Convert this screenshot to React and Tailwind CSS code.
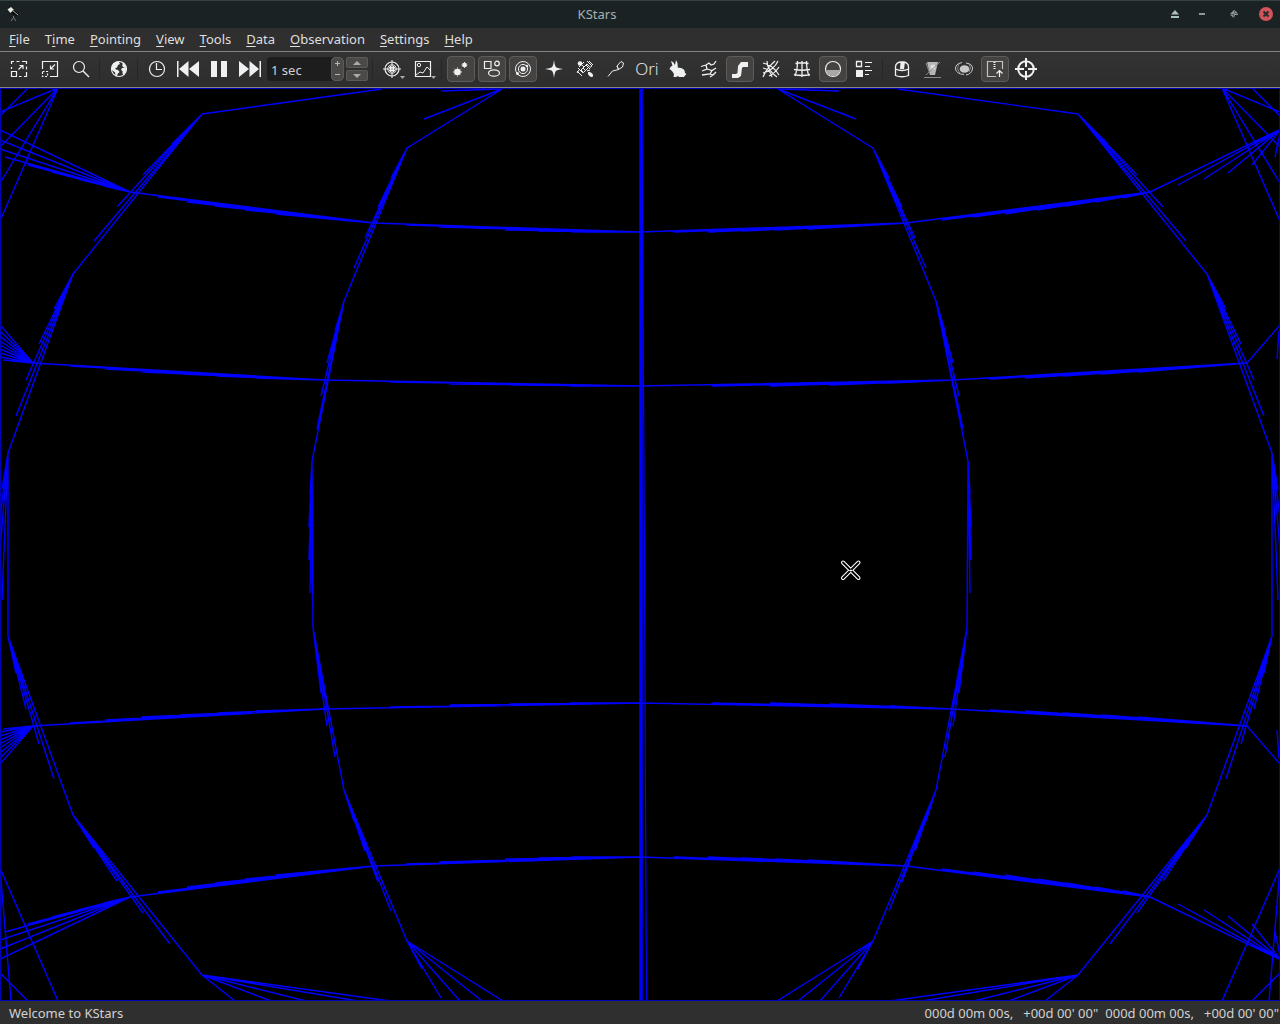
import React from "react";

const menus = [
  ["", "F", "ile"],
  ["T", "i", "me"],
  ["", "P", "ointing"],
  ["", "V", "iew"],
  ["", "T", "ools"],
  ["", "D", "ata"],
  ["", "O", "bservation"],
  ["", "S", "ettings"],
  ["", "H", "elp"],
];

function Glyph({ children }) {
  return (
    <svg viewBox="0 0 22 22" className="h-[22px] w-[22px]" fill="none" stroke="#eff0f1" strokeWidth="1" aria-hidden="true">
      {children}
    </svg>
  );
}

const solid = { fill: "#eff0f1", stroke: "none" };

const icons = {
  zoomIn: (
    <>
      <path d="M3.500 11V9M3.500 6V3.500H6M8.500 3.500h3M14 3.500h4.500V6M18.500 8.500v3M18.500 14v4.500H16M13.500 18.500H11" strokeWidth="1.200" />
      <path d="M3.500 13.500h5v5h-5zM10.500 11.500l4-4M11.500 7.500h3.500V11" strokeWidth="1.200" />
    </>
  ),
  zoomOut: (
    <>
      <path d="M3.500 11V3.500h15v15H11M11.500 7.500V11H15M11.500 11l4.500-4.500" strokeWidth="1.200" />
      <path d="M3.500 13.500h5v5h-5z" strokeDasharray="2 1.500" strokeWidth="1.200" />
    </>
  ),
  find: (
    <>
      <circle cx="9" cy="9" r="5.500" strokeWidth="1.200" />
      <path d="M13 13l6 6" strokeWidth="1.400" />
    </>
  ),
  globe: (
    <>
      <circle cx="11" cy="11" r="7.500" strokeWidth="1.200" />
      <path {...solid} d="M5 5.500l4-2 2 .5 1 2-2 1-1 2.500-2 1 1 1 2 .5 1.500 2-2 2-.5 2.500-1.500-1-.5-3L4 12V9zM13 4l3 1 2 3v2l-1-.5-2-.5-1-2 1-1zM14 10l3-.5 1.500 1.500-1 3.500-2 2.500-1-1.500V13l-1.500-1z" />
    </>
  ),
  clock: (
    <>
      <circle cx="11" cy="11" r="7.500" strokeWidth="1.200" />
      <path d="M10.500 5v6.500H16" strokeWidth="1.200" />
    </>
  ),
  back: <path {...solid} d="M0 3h1.500v16H0zM11.500 3v16L2 11zM22 3v16l-10-8z" />,
  pause: <path {...solid} d="M3 3h6v16H3zM13 3h6v16h-6z" />,
  forward: <path {...solid} d="M22 3h-1.500v16H22zM10.500 3v16l9.500-8zM0 3v16l10-8z" />,
  target: (
    <>
      <circle cx="11" cy="11" r="7" strokeWidth="1.200" />
      <circle cx="11" cy="11" r="4.200" />
      <path d="M11 2v18M2 11h18M9.500 8v6M12.500 8v6M8 9.500h6M8 12.500h6" />
    </>
  ),
  picture: (
    <>
      <path d="M3.500 3.500h15v15h-15z" strokeWidth="1.200" />
      <circle cx="7" cy="7" r="1.700" />
      <path d="M4 17l4-3 3 1 4-6 3 3" />
    </>
  ),
  stars: (
    <>
      <circle {...solid} cx="7.500" cy="14" r="3.300" />
      <circle {...solid} cx="14.500" cy="7" r="2.300" />
      <path d="M7.500 9.500v9M3 14h9M4.300 10.800l6.400 6.400M10.700 10.800l-6.400 6.400M14.500 4v6M11.500 7h6M12.400 4.900l4.200 4.200M16.600 4.900l-4.200 4.200" strokeDasharray="1 .6" />
    </>
  ),
  deepSky: (
    <>
      <path d="M3.500 3.500h6.500v7H3.500z" strokeWidth="1.200" />
      <circle cx="16" cy="5.500" r="2.300" strokeWidth="1.200" />
      <ellipse cx="13" cy="15" rx="5.500" ry="3.200" strokeWidth="1.200" />
    </>
  ),
  planets: (
    <>
      <circle cx="11" cy="11" r="7.500" />
      <circle cx="11" cy="11" r="4.600" />
      <circle {...solid} cx="11" cy="11" r="2.500" />
      <circle {...solid} cx="5.500" cy="15.500" r="1.500" />
      <circle {...solid} cx="15" cy="8" r="1.200" />
    </>
  ),
  nova: <path {...solid} d="M11 2q.8 7 2.500 7.500Q15 10.300 20 11q-5 .7-6.500 1.500Q11.800 13 11 20q-.8-7-2.500-7.500Q7 11.700 2 11q5-.7 6.500-1.500Q10.200 9 11 2z" />,
  satellite: (
    <>
      <path d="M7 12l6-6 2.500 2.500-6 6zM9 10l3 3M4 10l5 5M3 13l5 5M5 12l-2 3M13 3l5 5-2 1.500M15 3l4 4M12 7l4 4" />
      <circle {...solid} cx="6" cy="5.500" r="2.300" />
      <path d="M5 9l5-5M7 6l3 3M13 13l3-1M14 14l3 3" />
      <ellipse {...solid} cx="16.500" cy="16.500" rx="3" ry="1.800" transform="rotate(40 16.500 16.500)" />
    </>
  ),
  figure: <path d="M3 18.500l4.500-5.500 6-1.500M13.500 11.500l-1.500-3.500 4-4.500 2.500 1.500-1 4zM12 8l1.500 3.500" />,
  rabbit: <path {...solid} d="M4 3l2 1 2 3 1-5 1.500 3 .3 4.500Q11.500 9.500 14 10q4 1 4 5l1.500 1-1.500 1.500-1 1.500h-5l-1-1-2 1H6.500l.5-3-2-3-2.500-2L3.500 9l2-1.500z" />,
  boundary: <path d="M3 8.500l5-1.500 3-2 2 2 3-1 2-3M8 7l1 4-5 2M9 11l5 1.500 4-2.500M14 12.500l-2 3.500-8 1M12 16l3 1 3-3M15 17l-3 2" strokeWidth="1.300" />,
  milkyWay: <path {...solid} d="M19 4v5h-5l-1 1-1 8-3 2H3v-4h4l1.500-1 .5-7L12 4z" />,
  gridEq: <path d="M3 5q10 2 16 12M7 3q0 9 10 16M3 10q7 1 9 9M3 15Q14 12 18 3M9 18q6-3 10-9M3 19Q7 10 15 3" strokeWidth="1.200" />,
  gridHor: <path d="M6.500 3q0 9-2.500 15M11 3v16M15.500 3q0 9 2.500 15M4.500 5.500q6.500-1.500 13 0M3 11.500q8 1.500 16 0M3 16.500q8 2 16 0" strokeWidth="1.300" />,
  ground: (
    <>
      <circle cx="11" cy="11" r="7.500" strokeWidth="1.200" />
      <path d="M4 13h14q-2 5-7 5t-7-5z" fill="#a8a8a7" stroke="none" />
      <path d="M3.500 12.500h15" stroke="#a8a8a7" />
    </>
  ),
  list: (
    <>
      <path d="M3.500 3.500h5v5h-5z" strokeWidth="1.300" />
      <path {...solid} d="M3 12h7v7H3z" />
      <path d="M12 4.500h7M12 8.500h5M12 12.500h7M12 16.500h4" strokeWidth="1.200" />
    </>
  ),
  dome: (
    <>
      <path d="M4.500 11V9q0-5 6.500-5t6.500 5v2q-6.500 3-13 0zM4.500 11v6.500q6.500 2.500 13 0V11" strokeWidth="1.300" />
      <path {...solid} d="M9.500 4q4-1 4.500 0l-1 7H9z" />
    </>
  ),
  scope: (
    <>
      <path d="M5 4h11l-3 13H8z" fill="#b7b7b6" stroke="none" />
      <circle cx="11" cy="9" r="2.500" fill="#e0e0df" stroke="none" />
      <path d="M4 17L18 4M2 19.500h17M4 5l4 11" stroke="#8b8b8a" />
    </>
  ),
  galaxy: (
    <>
      <ellipse cx="11.500" cy="11" rx="4.800" ry="3.800" fill="#c8c8c7" stroke="none" />
      <path d="M9 4.500Q2 6 2.500 11q1 5 8.500 5.500M13 5q7 1 6.500 6-1 5-6.500 6" stroke="#c8c8c7" />
      <path d="M6 6q-3 5 1 9M16 6q3 4 0 8" stroke="#8b8b8a" />
    </>
  ),
  exportBox: (
    <>
      <path d="M12 18.500H3.500v-15h15V11" stroke="#c2c2c1" strokeWidth="1.200" />
      <path d="M10.500 4v7" strokeDasharray="1 1" strokeWidth="2" />
      <path d="M15.500 19v-6M12.500 15.500l3-3 3 3" strokeWidth="1.200" />
    </>
  ),
  crosshair: (
    <>
      <circle cx="11" cy="11" r="7.800" strokeWidth="2" />
      <path d="M11 0v9M11 13v9M0 11h9M13 11h9" strokeWidth="2" />
    </>
  ),
};

function Tool({ name, label, on, menu }) {
  return (
    <button
      type="button"
      aria-label={label}
      className={
        "relative flex h-[26px] w-7 shrink-0 items-center justify-center rounded-sm border " +
        (on ? "border-[#5c5b59] bg-[#444341]" : "border-transparent")
      }
    >
      <Glyph>{icons[name]}</Glyph>
      {menu && (
        <svg viewBox="0 0 5 3" className="absolute bottom-0.5 right-0 h-[3px] w-[5px]" aria-hidden="true">
          <path d="M0 0h5L2.500 3z" fill="#aaa" />
        </svg>
      )}
    </button>
  );
}

function Separator() {
  return <div className="ml-px mr-0.5 h-5 w-px shrink-0 bg-[#262626]" />;
}

const groups = [
  ["stars", "Stars", true],
  ["deepSky", "Deep sky objects", true],
  ["planets", "Solar system", true],
  ["nova", "Supernovae"],
  ["satellite", "Satellites"],
  ["figure", "Constellation lines"],
  ["ori", "Constellation names"],
  ["rabbit", "Constellation art"],
  ["boundary", "Constellation boundaries"],
  ["milkyWay", "Milky Way", true],
  ["gridEq", "Equatorial grid"],
  ["gridHor", "Horizontal grid"],
  ["ground", "Ground", true],
  ["list", "Observing list"],
];

/* Each fan is a start vertex followed by the points its rays end on. */
const mirroredFans = [
  [202, 114, 172, 144, 143, 175, 117, 207, 94, 241, 73, 274],
  [73, 274, 54, 309, 39, 344, 26, 380, 16, 416, 8, 453],
  [8, 453, 2, 489, -1, 526, -1, 563, 2, 600, 8, 636],
  [8, 636, 16, 673, 26, 709, 39, 744, 54, 779, 73, 815],
  [73, 815, 94, 848, 117, 881, 143, 913, 170, 944, 202, 975],
  [202, 975, 235, 1001, 271, 1001, 306, 1001, 358, 1001, 390, 1001],
  [382, 89, 202, 114],
  [502, 89, 441, 91, 424, 119, 407, 148],
  [407, 148, 391, 178, 378, 207, 365, 238, 354, 268, 344, 301],
  [344, 301, 335, 331, 327, 363, 321, 396, 317, 429, 312, 461],
  [312, 461, 310, 494, 309, 527, 309, 560, 310, 593, 313, 628],
  [313, 628, 317, 660, 321, 693, 327, 726, 335, 757, 344, 790],
  [344, 790, 354, 821, 365, 851, 378, 882, 391, 911, 407, 941],
  [407, 941, 422, 969, 441, 998, 460, 1001, 482, 1001, 503, 1001],
  [58, 88, 0, 112, 0, 147, 0, 183, 0, 221],
  [28, 88, 0, 116],
  [0, 868, 58, 1001, 11, 1001],
  [0, 973, 28, 1001],
];

/* Parallels above the centre; the lower ones are their reflection. */
const parallelFans = [
  [1281, 129, 1275, 157, 1252, 165, 1228, 173, 1204, 179, 1178, 185, 1150, 192],
  [1150, 192, 1123, 198, 1095, 202, 1066, 206, 1037, 210, 1005, 214, 973, 217, 942, 220, 906, 223],
  [906, 223, 874, 225, 841, 227, 808, 229, 775, 230, 742, 231, 708, 232, 674, 232, 640, 232],
  [640, 232, 606, 232, 572, 232, 538, 231, 505, 230, 472, 228, 439, 227, 406, 225, 374, 223],
  [374, 223, 342, 220, 308, 217, 276, 214, 245, 210, 215, 206, 187, 202, 158, 197, 130, 192],
  [130, 192, 104, 186, 78, 179, 52, 172, 28, 165, 5, 157, 0, 149, 0, 140, 0, 130],
  [1280, 325, 1247, 363],
  [1279, 331, 1277, 359],
  [1247, 363, 1212, 366, 1175, 369, 1138, 372, 1101, 374, 1063, 376, 1025, 378, 990, 379, 952, 380],
  [952, 380, 890, 383, 830, 385, 770, 386, 712, 386, 640, 386],
  [640, 386, 570, 386, 510, 385, 450, 384, 390, 382, 325, 380],
  [325, 380, 288, 379, 255, 378, 217, 376, 180, 374, 142, 372, 105, 369, 70, 366, 33, 363],
  [33, 363, 3, 360, 0, 357, 0, 353, 0, 349, 0, 345, 0, 341, 0, 336, 0, 331, 0, 325],
];

function rays(list) {
  return list
    .map((f) => {
      let d = "";
      for (let i = 2; i < f.length; i += 2) d += `M${f[0]} ${f[1]}L${f[i]} ${f[i + 1]}`;
      return d;
    })
    .join("");
}

const meridians = rays(mirroredFans);
const parallels = rays(parallelFans);

function SkyMap() {
  return (
    <svg
      viewBox="0 88 1280 913"
      preserveAspectRatio="none"
      className="block min-h-0 w-full flex-1 bg-black"
      role="img"
      aria-label="Sky map"
    >
      <g fill="none" stroke="#0000ff" strokeWidth="1.400">
        <path d={meridians} />
        <path d={meridians} transform="translate(1280 0) scale(-1 1)" />
        <path d={parallels} />
        <path d={parallels} transform="translate(0 1089) scale(1 -1)" />
        <path d="M641 88v913" strokeWidth="3.500" />
        <path d="M641.500 88L643 303L644.500 560L645.500 806L646.500 1001" strokeWidth="1.200" />
        <path d="M.5 88v913M1279.500 88v913M0 88.500h1280M0 1000.500h1280" stroke="#0000b8" strokeWidth="1" />
      </g>
      <g strokeLinecap="round">
        <path d="M843 562.500l15.500 15.500M858.500 562.500L843 578" stroke="#fff" strokeWidth="4" />
        <path d="M843 562.500l15.500 15.500M858.500 562.500L843 578" stroke="#000" strokeWidth="1.800" />
        <path d="M850 570.500h1.500" stroke="#fff" strokeWidth="1.500" />
      </g>
    </svg>
  );
}

export default function App() {
  return (
    <div className="flex h-screen flex-col overflow-hidden bg-[#2f2f2f] font-['Noto_Sans',sans-serif] text-[13px] leading-[18px] text-[#dfdfdf]">
      <header className="flex h-7 shrink-0 items-center border-t border-[#334144] bg-[#1b2224] pb-px">
        <div className="flex w-[30px] pl-1.5">
          <svg viewBox="0 0 14 16" className="h-4 w-3.5" aria-hidden="true">
            <path d="M1.500 3.500L5 1l3 3-3.500 3z" fill="#e8e8e0" />
            <path d="M4.500 7L8 4l4.500 4-1.500 2z" fill="#0a0a0a" />
            <path d="M6 4l6 5" stroke="#aaa" />
            <path d="M7.500 10v2M7.500 11.500L5 15M7.500 11.500L10 15" stroke="#777" fill="none" />
          </svg>
        </div>
        <h1 className="flex-1 text-center text-[#a3b1b2]">KStars</h1>
        <div className="flex w-[116px] shrink-0 items-center justify-end">
          <button type="button" aria-label="Keep above" className="flex w-[22px] justify-center">
            <svg viewBox="0 0 8 8" className="h-2 w-2" fill="#a9bfbd"><path d="M4 0l4 4.500H0zM0 6h8v2H0z" /></svg>
          </button>
          <button type="button" aria-label="Minimize" className="flex w-8 justify-center">
            <svg viewBox="0 0 8 8" className="h-2 w-2" fill="#8d999a"><path d="M1 3h6v2H1z" /></svg>
          </button>
          <button type="button" aria-label="Restore" className="flex w-8 justify-center">
            <svg viewBox="0 0 8 8" className="h-2 w-2" fill="#8d999a"><path d="M4.500 0v3.500H8zM0 4.500h3.500V8zM4 0h1v4h3v1H5L4 8V4H0z" /></svg>
          </button>
          <button type="button" aria-label="Close" className="ml-0.5 flex w-7 justify-center">
            <svg viewBox="0 0 14 14" className="h-3.5 w-3.5">
              <circle cx="7" cy="7" r="7" fill="#d15459" />
              <path d="M4.500 4.500l5 5M9.500 4.500l-5 5" stroke="#222b2d" strokeWidth="2" />
            </svg>
          </button>
        </div>
      </header>

      <nav className="flex h-6 shrink-0 items-center gap-px border-b border-[#848484] pb-0.5 pl-0.5">
        {menus.map(([a, k, b]) => (
          <button key={k + b} type="button" className="px-[7px]">
            {a}
            <span className="underline decoration-1 underline-offset-2">{k}</span>
            {b}
          </button>
        ))}
      </nav>

      <div role="toolbar" aria-label="Main toolbar" className="flex h-9 shrink-0 items-center gap-[3px] overflow-hidden border-b border-[#848484] bg-linear-to-b from-[#333] to-[#2d2d2d] pb-px pl-[5px]">
        <Tool name="zoomIn" label="Zoom in" />
        <Tool name="zoomOut" label="Zoom out" />
        <Tool name="find" label="Find object" />
        <Separator />
        <Tool name="globe" label="Set geographic location" />
        <Separator />
        <Tool name="clock" label="Set time" />
        <Tool name="back" label="Step backward" />
        <Tool name="pause" label="Stop clock" />
        <Tool name="forward" label="Step forward" />
        <div className="flex shrink-0 items-center gap-0.5">
          <div className="flex h-6 w-[77px] overflow-hidden rounded-sm bg-[#1d1d1d]">
            <input aria-label="Time step" defaultValue="1 sec" className="h-full w-16 min-w-0 flex-1 bg-transparent pl-1 pt-0.5 text-[#d2d2d2] outline-none" />
            <div className="flex w-[13px] flex-col rounded-sm border border-[#5a5a59] bg-[#4b4a49] text-[#b5b5b5]">
              <button type="button" aria-label="Increase time step" className="flex flex-1 items-center justify-center">
                <svg viewBox="0 0 5 5" className="h-[5px] w-[5px]"><path d="M0 2.500h5M2.500 0v5" stroke="currentColor" /></svg>
              </button>
              <button type="button" aria-label="Decrease time step" className="flex flex-1 items-center justify-center">
                <svg viewBox="0 0 5 5" className="h-[5px] w-[5px]"><path d="M0 2.500h5" stroke="currentColor" /></svg>
              </button>
            </div>
          </div>
          <div className="flex w-[22px] flex-col gap-0.5">
            <button type="button" aria-label="Next time unit" className="flex h-[11px] items-center justify-center rounded-xs border border-[#5a5a59] bg-[#4b4a49]">
              <svg viewBox="0 0 8 4" className="h-1 w-2"><path d="M0 4h8L4 0z" fill="#aaa" /></svg>
            </button>
            <button type="button" aria-label="Previous time unit" className="flex h-[11px] items-center justify-center rounded-xs border border-[#5a5a59] bg-[#4b4a49]">
              <svg viewBox="0 0 8 4" className="h-1 w-2"><path d="M0 0h8L4 4z" fill="#aaa" /></svg>
            </button>
          </div>
        </div>
        <Separator />
        <Tool name="target" label="FOV symbols" menu />
        <Tool name="picture" label="HiPS overlay" menu />
        <Separator />
        {groups.map(([name, label, on]) =>
          name === "ori" ? (
            <button key={name} type="button" aria-label={label} className="flex h-[26px] w-7 shrink-0 items-center justify-center font-['Open_Sans',sans-serif] text-[17px] font-light text-[#eff0f1]">
              Ori
            </button>
          ) : (
            <Tool key={name} name={name} label={label} on={on} />
          )
        )}
        <Separator />
        <Tool name="dome" label="Ekos" />
        <Tool name="scope" label="Telescope" />
        <Tool name="galaxy" label="FITS viewer" />
        <Tool name="exportBox" label="Mount box" on />
        <Tool name="crosshair" label="Center telescope" />
      </div>

      <SkyMap />

      <footer className="flex h-[23px] shrink-0 items-center justify-between pb-px pl-[9px] pr-px pt-0.5 text-[#d2d2d2]">
        <span>Welcome to KStars</span>
        <div className="flex gap-[7px]">
          <span className="flex gap-2.5"><span>000d 00m 00s,</span><span>+00d 00' 00"</span></span>
          <span className="flex gap-2.5"><span>000d 00m 00s,</span><span>+00d 00' 00"</span></span>
        </div>
      </footer>
    </div>
  );
}
